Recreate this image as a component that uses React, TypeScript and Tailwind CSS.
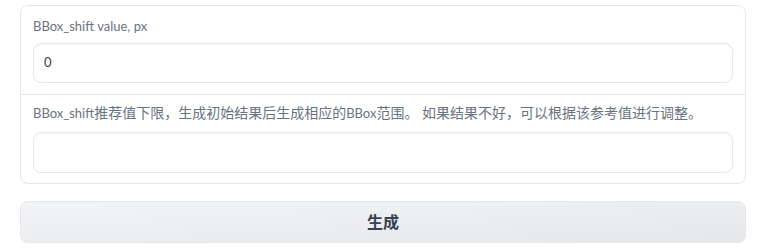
export default function App() {
  return (
    <div
      className="w-[760px] h-[250px] bg-white pt-[5px]"
      style={{ fontFamily: '"Source Sans Pro", Lato, "Noto Sans CJK SC", sans-serif' }}
    >
      <div className="ml-[20px] w-[726px]">
        {/* settings block */}
        <div className="border border-[#e5e7eb] rounded-lg bg-white">
          <div className="px-3 pt-[10px] pb-[11px]">
            <div className="text-[13px] leading-[20px] text-[#6b7280]">BBox_shift value, px</div>
            <div className="mt-[7px] h-[40px] rounded-lg border border-[#e5e7eb] shadow-[inset_0_1px_2px_rgba(0,0,0,0.04)] flex items-center px-[10px] text-[13px] text-[#374151]">
              0
            </div>
          </div>
          <div className="border-t border-[#e5e7eb] px-3 pt-[8px] pb-[10px]">
            <div className="text-[14px] leading-[20px] text-[#6b7280]">
              <span className="text-[13px]">BBox_shift</span>推荐值下限，生成初始结果后生成相应的<span className="text-[13px]">BBox</span>范围。 如果结果不好，可以根据该参考值进行调整。
            </div>
            <div className="mt-[9px] h-[41px] rounded-lg border border-[#e5e7eb] shadow-[inset_0_1px_2px_rgba(0,0,0,0.04)]" />
          </div>
        </div>

        <button className="mt-[17px] w-full h-[42px] rounded-lg border border-[#e5e7eb] bg-gradient-to-br from-[#f3f4f6] to-[#e5e7eb] text-[16px] font-bold text-[#374151]">
          生成
        </button>
      </div>
    </div>
  )
}
